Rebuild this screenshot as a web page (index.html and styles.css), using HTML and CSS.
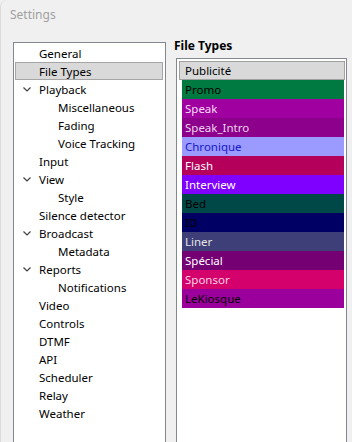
FILE: index.html
```html
<!DOCTYPE html>
<html lang="fr">
<head>
  <meta charset="UTF-8" />
  <title>Settings</title>
  <link rel="stylesheet" href="styles.css">
</head>
<body>
  <div class="window">
    <div class="titlebar">Settings</div>

    <div class="content">
      <div class="tree">
        <div class="item"><span class="twisty"></span>General</div>
        <div class="item selected"><span class="twisty"></span>File Types</div>
        <div class="item"><span class="twisty"><svg width="8" height="5" viewBox="0 0 8 5"><path d="M0.5 0.5 L4 4 L7.5 0.5" /></svg></span>Playback</div>
        <div class="item sub"><span class="twisty"></span>Miscellaneous</div>
        <div class="item sub"><span class="twisty"></span>Fading</div>
        <div class="item sub"><span class="twisty"></span>Voice Tracking</div>
        <div class="item"><span class="twisty"></span>Input</div>
        <div class="item"><span class="twisty"><svg width="8" height="5" viewBox="0 0 8 5"><path d="M0.5 0.5 L4 4 L7.5 0.5" /></svg></span>View</div>
        <div class="item sub"><span class="twisty"></span>Style</div>
        <div class="item"><span class="twisty"></span>Silence detector</div>
        <div class="item"><span class="twisty"><svg width="8" height="5" viewBox="0 0 8 5"><path d="M0.5 0.5 L4 4 L7.5 0.5" /></svg></span>Broadcast</div>
        <div class="item sub"><span class="twisty"></span>Metadata</div>
        <div class="item"><span class="twisty"><svg width="8" height="5" viewBox="0 0 8 5"><path d="M0.5 0.5 L4 4 L7.5 0.5" /></svg></span>Reports</div>
        <div class="item sub"><span class="twisty"></span>Notifications</div>
        <div class="item"><span class="twisty"></span>Video</div>
        <div class="item"><span class="twisty"></span>Controls</div>
        <div class="item"><span class="twisty"></span>DTMF</div>
        <div class="item"><span class="twisty"></span>API</div>
        <div class="item"><span class="twisty"></span>Scheduler</div>
        <div class="item"><span class="twisty"></span>Relay</div>
        <div class="item"><span class="twisty"></span>Weather</div>
      </div>

      <div class="panel">
        <h2>File Types</h2>
        <div class="list">
          <div class="list-head">Publicité</div>
          <div class="row promo">Promo</div>
          <div class="row speak">Speak</div>
          <div class="row speak-intro">Speak_Intro</div>
          <div class="row chronique">Chronique</div>
          <div class="row flash">Flash</div>
          <div class="row interview">Interview</div>
          <div class="row bed">Bed</div>
          <div class="row id">ID</div>
          <div class="row liner">Liner</div>
          <div class="row special">Spécial</div>
          <div class="row sponsor">Sponsor</div>
          <div class="row kiosque">LeKiosque</div>
        </div>
      </div>
    </div>
  </div>
</body>
</html>
```

FILE: styles.css
```css
* {
  box-sizing: border-box;
}

body {
  margin: 0;
  font-family: 'Noto Sans', sans-serif;
  font-size: 11.5px;
  background: #f0f0f0;
  color: #000;
}

.window {
  display: flex;
  flex-direction: column;
  height: 442px;
  border-left: 1px solid #dadada;
  border-top-left-radius: 7px;
}

.titlebar {
  height: 30px;
  padding-left: 9px;
  line-height: 30px;
  font-size: 12px;
  color: #a0a0a0;
}

.content {
  flex: 1;
  display: flex;
  padding: 8px 0 0 12px;
  min-height: 0;
}

.tree {
  width: 153px;
  margin-top: 4px;
  padding: 1px 2px 0 1px;
  background: #fff;
  border: 1px solid #828790;
  border-bottom: none;
}

.item {
  display: flex;
  align-items: center;
  height: 18px;
  white-space: nowrap;
}

.item.sub {
  padding-left: 19px;
}

.item.selected {
  background: #d9d9d9;
  border: 1px solid #a6a6a6;
}

.twisty {
  width: 24px;
  display: flex;
  align-items: center;
  padding-left: 8px;
}

.item.selected .twisty {
  width: 23px;
}

.twisty svg path {
  fill: none;
  stroke: #404040;
  stroke-width: 1.2;
}

.panel {
  flex: 1;
  display: flex;
  flex-direction: column;
  margin-left: 8px;
  padding-right: 5px;
}

.panel h2 {
  margin: 0;
  font-size: 12px;
  font-weight: bold;
  line-height: 16px;
}

.list {
  flex: 1;
  margin: 4px 0 0 2px;
  padding: 2px 1px 0 2px;
  background: #fff;
  border: 1px solid #828790;
  border-bottom: none;
}

.list-head {
  height: 19px;
  line-height: 17px;
  padding-left: 5px;
  background: #d9d9d9;
  border: 1px solid #a0a0a0;
}

.row {
  height: 19px;
  line-height: 19px;
  margin: 0 1px 0 3px;
  padding-left: 3px;
}

.promo { background: #007a40; color: #000; }
.speak { background: #a000a0; color: #f4dcf4; }
.speak-intro { background: #8c008c; color: #ecd4ec; }
.chronique { background: #9a9aff; color: #1818c8; }
.flash { background: #b4005a; color: #fff; }
.interview { background: #8000ff; color: #fff; }
.bed { background: #004848; color: #000; }
.id { background: #000064; color: #000; }
.liner { background: #3e3e78; color: #e4e4e4; }
.special { background: #740074; color: #fff; }
.sponsor { background: #d4006c; color: #ffd4e4; }
.kiosque { background: #9c009c; color: #000; }
```
